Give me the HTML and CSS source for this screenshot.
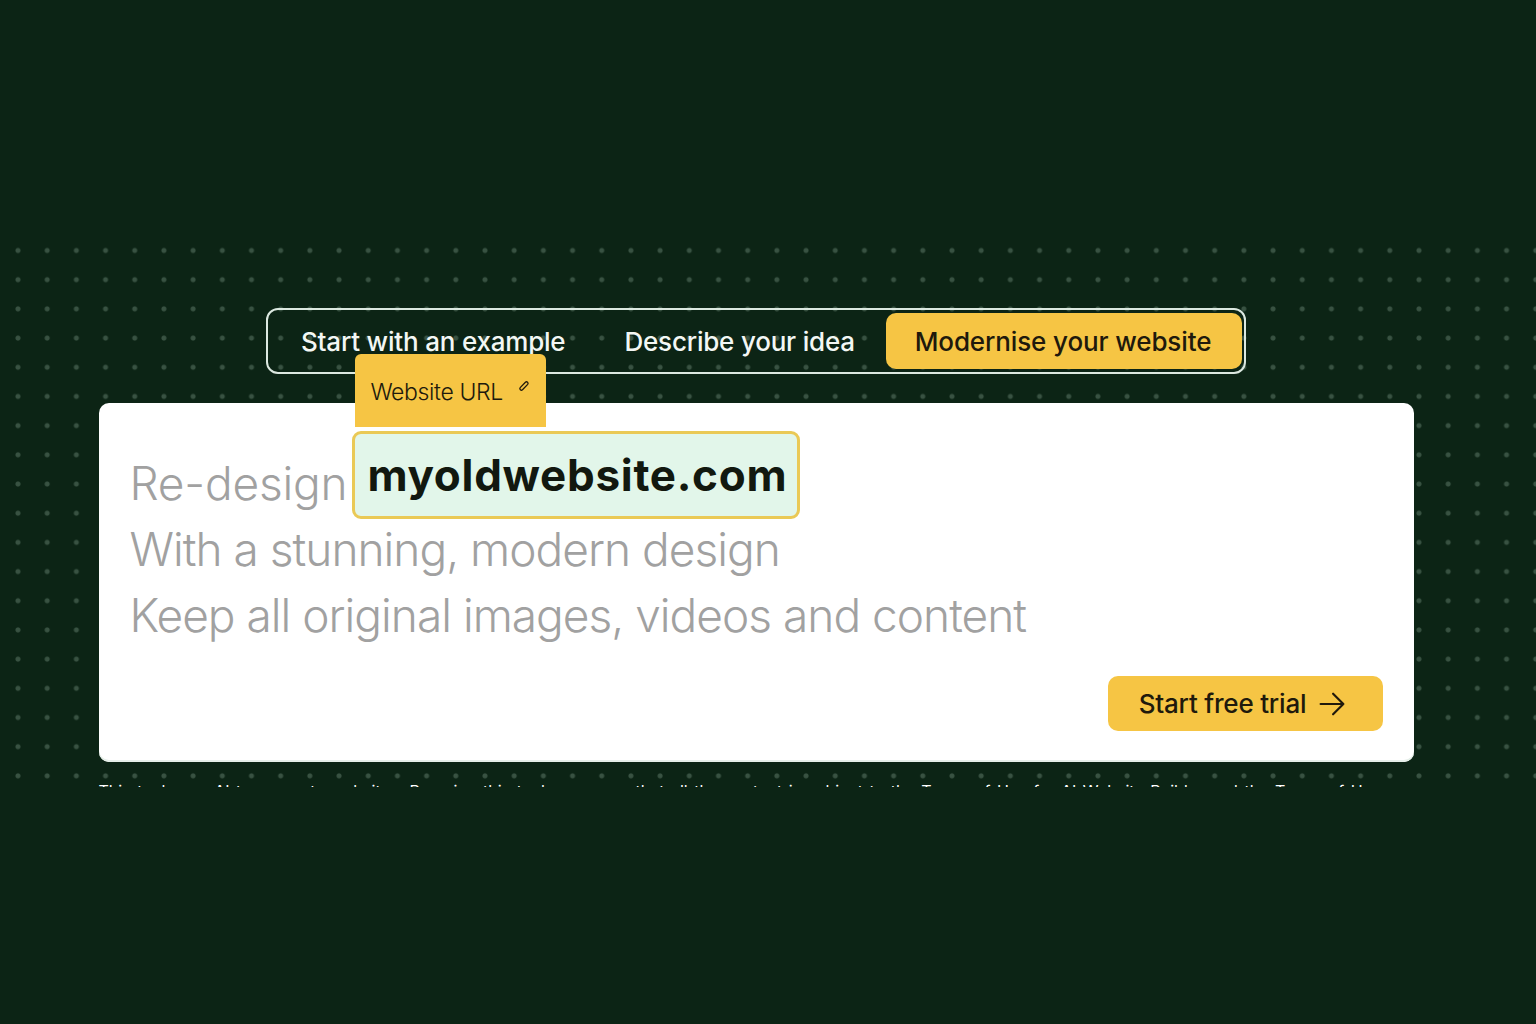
FILE: index.html
```html
<!DOCTYPE html>
<html lang="en">
<head>
<meta charset="utf-8">
<title>Modernise your website</title>
<link rel="stylesheet" href="styles.css">
</head>
<body>
<main class="stage">
  <nav class="tabs">
    <button class="tab tab-a">Start with an example</button>
    <button class="tab tab-b">Describe your idea</button>
    <button class="tab tab-active">Modernise your website</button>
  </nav>
  <section class="card">
    <div class="prompt">
      <div class="line line-first">
        <span class="verb">Re-design</span>
        <span class="field">
          <span class="field-label">Website URL
            <svg class="pencil" viewBox="0 0 12 12" width="12" height="12" aria-hidden="true"><path d="M2.2 7.6 7.4 2.2a1.6 1.6 0 0 1 2.3 2.2L4.5 9.8a1.6 1.6 0 0 1-2.3-2.2Z" fill="none" stroke="currentColor" stroke-width="1.3"/></svg>
          </span>
          <span class="field-value">myoldwebsite.com</span>
        </span>
      </div>
      <div class="line">With a stunning, modern design</div>
      <div class="line">Keep all original images, videos and content</div>
    </div>
    <div class="actions">
      <button class="cta">Start free trial
        <svg viewBox="0 0 24 24" width="26" height="26" aria-hidden="true"><path d="M1.5 12h21M13 2.5 22.5 12 13 21.5" fill="none" stroke="currentColor" stroke-width="2" stroke-linecap="round" stroke-linejoin="round"/></svg>
      </button>
    </div>
  </section>
  <p class="legal">This tool uses AI to generate websites. By using this tool you agree that all the content is subject to the Terms of Use for AI Website Builder and the Terms of Use</p>
</main>
</body>
</html>
```
FILE: styles.css
```css
* { box-sizing: border-box; }
html, body { margin: 0; height: 100%; }
body {
  background: #0c2415;
  font-family: Inter, "Liberation Sans", sans-serif;
  overflow: hidden;
}
.stage {
  margin-top: 240px;
  height: 547px;
  overflow: hidden;
  display: flex;
  flex-direction: column;
  align-items: center;
  padding: 68px 24px 0 0;
  background-image: radial-gradient(circle at center, rgba(118,146,128,.42) 0, rgba(118,146,128,.42) 2px, transparent 3px);
  background-size: 29.2px 29.2px;
  background-position: 3.4px -4.1px;
}
button { font: inherit; border: 0; background: none; cursor: pointer; }
.tabs {
  width: 980px;
  height: 66px;
  flex: none;
  border: 2px solid #dce8e0;
  border-radius: 12px;
  display: flex;
  align-items: center;
  padding: 0 2px 0 33px;
}
.tab {
  color: #f3f7f4;
  font-size: 26px;
  font-weight: 500;
  letter-spacing: -.2px;
  white-space: nowrap;
  padding: 0;
}
.tab-b { margin-left: 59px; }
.tab-active {
  margin-left: auto;
  width: 356px;
  height: 56px;
  padding-right: 2px;
  background: #f6c544;
  color: #20190c;
  border-radius: 10px;
  font-weight: 550;
  letter-spacing: -.12px;
}
.card {
  width: 1315px;
  height: 359px;
  margin-top: 29px;
  flex: none;
  background: #fff;
  border-radius: 10px;
  box-shadow: inset 0 -2px 0 #e6efe9;
  padding: 48px 31px 31px;
  display: flex;
  flex-direction: column;
  justify-content: space-between;
}
.line {
  color: #a1a1a1;
  font-size: 46px;
  font-weight: 320;
  line-height: 65.5px;
  letter-spacing: -.98px;
  white-space: nowrap;
}
.verb { letter-spacing: -.2px; }
.line-first { display: flex; align-items: center; height: 66px; gap: 5px; }
.field { position: relative; display: block; }
.field-value {
  display: block;
  width: 448px;
  height: 88px;
  margin-top: -18px;
  border: 3px solid #eac956;
  border-radius: 9px;
  background: #e2f6ea;
  color: #12180f;
  font-size: 44px;
  font-weight: 650;
  line-height: 82px;
  padding-left: 12px;
  letter-spacing: .7px;
}
.field-label {
  position: absolute;
  left: 3px;
  top: -95px;
  width: 191px;
  height: 73px;
  background: #f6c544;
  border-radius: 6px 6px 0 0;
  color: #20190c;
  font-size: 23px;
  line-height: 1;
  letter-spacing: -.35px;
  padding: 27px 0 0 15px;
  display: block;
}
.pencil { position: absolute; left: 163px; top: 26px; }
.actions { display: flex; justify-content: flex-end; }
.cta {
  width: 275px;
  height: 55px;
  padding: 0 6px 0 0;
  border-radius: 10px;
  background: #f6c544;
  color: #20190c;
  font-size: 26px;
  font-weight: 550;
  letter-spacing: -.2px;
  display: flex;
  align-items: center;
  justify-content: center;
  gap: 13px;
}
.legal {
  width: 1282px;
  margin: 19px 33px 0 0;
  flex: none;
  color: #fff;
  font-size: 16px;
  line-height: 20px;
  white-space: nowrap;
  text-align: justify;
  text-align-last: justify;
}
```
